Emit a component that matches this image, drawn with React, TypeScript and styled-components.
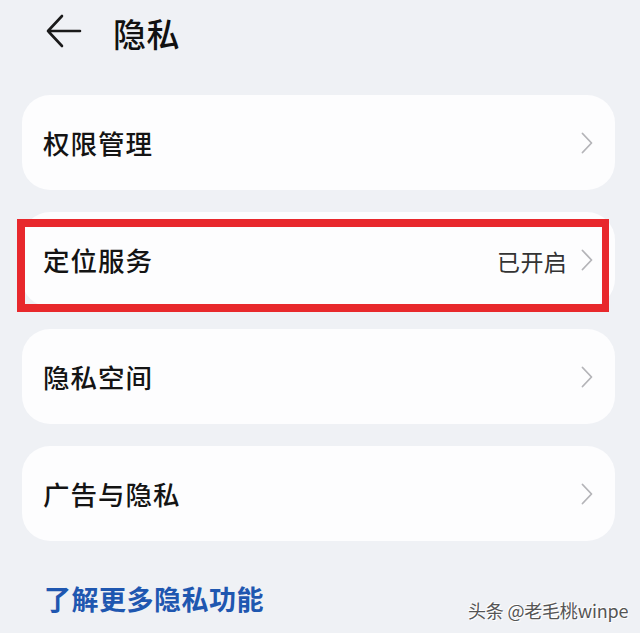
import React from "react";
import styled, { createGlobalStyle } from "styled-components";

const Global = createGlobalStyle`
  html, body { margin: 0; padding: 0; background: #eff1f5; }
  body { font-family: "Noto Sans CJK SC", "Noto Sans", sans-serif; }
`;

const Page = styled.div`
  position: relative;
  width: 640px;
  height: 633px;
  overflow: hidden;
  background: #eff1f5;
  box-sizing: border-box;
  padding: 0 25px 0 22px;
`;

const Header = styled.div`
  height: 95px;
  display: flex;
  align-items: flex-start;
  padding-top: 11px;
  box-sizing: border-box;
  gap: 31px;
  padding-left: 24px;
`;

const BackIcon = styled.svg`
  width: 36px;
  height: 40px;
  margin-top: 1px;
`;

const Title = styled.h1`
  margin: 0;
  font-size: 33px;
  font-weight: 500;
  color: #111;
  line-height: 44px;
  letter-spacing: 0.5px;
`;

const List = styled.div`
  display: flex;
  flex-direction: column;
  gap: 22px;
`;

const Card = styled.div`
  position: relative;
  height: 95px;
  background: #fdfdfe;
  border-radius: 28px;
  display: flex;
  align-items: center;
  padding: 0 22px 0 21px;
  box-sizing: border-box;
`;

const Label = styled.span`
  flex: 1;
  font-size: 26.5px;
  font-weight: 500;
  color: #141414;
  letter-spacing: 1px;
  line-height: 1;
  margin-top: 2px;
`;

const Value = styled.span`
  font-size: 23px;
  color: #333;
  margin-right: 14px;
  letter-spacing: 0.3px;
  margin-top: 2px;
`;

const Chevron = styled.svg`
  width: 12px;
  height: 22px;
`;

const Highlight = styled.div`
  position: absolute;
  top: 7px;
  left: -5px;
  right: 6px;
  bottom: -5px;
  border: 8px solid #e8282c;
  border-right-width: 7px;
  pointer-events: none;
`;

const MoreLink = styled.a`
  display: block;
  margin-top: 43px;
  margin-left: 22px;
  font-size: 27px;
  font-weight: 700;
  color: #1f57b0;
  letter-spacing: 0.5px;
  text-decoration: none;
  line-height: 30px;
`;

const Watermark = styled.div`
  position: absolute;
  left: 468px;
  top: 597px;
  font-family: "Noto Sans CJK SC", "Liberation Sans", sans-serif;
  font-size: 18px;
  color: #555;
  letter-spacing: -0.2px;
  text-shadow: 1px 1px 0 #fff, -1px -1px 0 #fff;
`;

const Arrow = () => (
  <BackIcon viewBox="0 0 36 40">
    <path d="M2 19 H34 M16 4 L2 19 L16 34" fill="none" stroke="#1a1a1a" strokeWidth="2.6" strokeLinecap="round" strokeLinejoin="round" />
  </BackIcon>
);

const Chev = () => (
  <Chevron viewBox="0 0 12 22">
    <path d="M1.5 1.5 L10.5 11 L1.5 20.5" fill="none" stroke="#b4b4b8" strokeWidth="1.8" strokeLinecap="round" strokeLinejoin="round" />
  </Chevron>
);

type Item = { label: string; value?: string; marked?: boolean };

const items: Item[] = [
  { label: "权限管理" },
  { label: "定位服务", value: "已开启", marked: true },
  { label: "隐私空间" },
  { label: "广告与隐私" },
];

export default function App() {
  return (
    <>
      <Global />
      <Page>
        <Header>
          <Arrow />
          <Title>隐私</Title>
        </Header>
        <List>
          {items.map((it) => (
            <Card key={it.label}>
              <Label>{it.label}</Label>
              {it.value && <Value>{it.value}</Value>}
              <Chev />
              {it.marked && <Highlight />}
            </Card>
          ))}
        </List>
        <MoreLink>了解更多隐私功能</MoreLink>
        <Watermark>头条 @老毛桃winpe</Watermark>
      </Page>
    </>
  );
}
